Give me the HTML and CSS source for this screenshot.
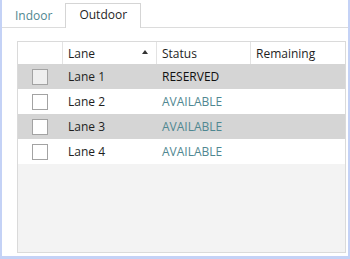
FILE: index.html
```html
<!DOCTYPE html>
<html lang="en">
<head>
<meta charset="UTF-8" />
<title>Lanes</title>
<link rel="stylesheet" href="styles.css">
</head>
<body>

<div class="window">
  <div class="tabs">
    <div class="tab">Indoor</div>
    <div class="tab active">Outdoor</div>
  </div>

  <div class="panel">
    <div class="grid">
      <div class="row head">
        <div class="cell"></div>
        <div class="cell sorted">Lane <span class="sort-arrow"></span></div>
        <div class="cell">Status</div>
        <div class="cell">Remaining</div>
      </div>
      <div class="row alt">
        <div class="cell check"><span class="box filled"></span></div>
        <div class="cell">Lane 1</div>
        <div class="cell reserved">RESERVED</div>
        <div class="cell"></div>
      </div>
      <div class="row">
        <div class="cell check"><span class="box"></span></div>
        <div class="cell">Lane 2</div>
        <div class="cell available">AVAILABLE</div>
        <div class="cell"></div>
      </div>
      <div class="row alt">
        <div class="cell check"><span class="box"></span></div>
        <div class="cell">Lane 3</div>
        <div class="cell available">AVAILABLE</div>
        <div class="cell"></div>
      </div>
      <div class="row">
        <div class="cell check"><span class="box"></span></div>
        <div class="cell">Lane 4</div>
        <div class="cell available">AVAILABLE</div>
        <div class="cell"></div>
      </div>
      <div class="filler"></div>
    </div>
  </div>
</div>

</body>
</html>
```

FILE: styles.css
```css
html, body {
  margin: 0;
  padding: 0;
  height: 100%;
}
body {
  font-family: 'Open Sans', 'Noto Sans', sans-serif;
  font-size: 12px;
  color: #1e1e1e;
  background: #fff;
}
.window {
  box-sizing: border-box;
  height: 100vh;
  border: 2px solid #c4d2f6;
  border-top: none;
  border-bottom-width: 3px;
  display: flex;
  flex-direction: column;
}
/* Tabs */
.tabs {
  display: flex;
  align-items: flex-end;
  height: 27px;
  border-bottom: 1px solid #dcdcdc;
}
.tab {
  padding: 0 13px;
  height: 23px;
  line-height: 23px;
  color: #4f8791;
}
.tab.active {
  height: 24px;
  box-sizing: border-box;
  padding: 0 13px;
  line-height: 22px;
  border: 1px solid #d5d5d5;
  border-bottom: none;
  color: #1e1e1e;
  margin-bottom: -1px;
  background: #fff;
  height: 25px;
}
/* Grid */
.panel {
  flex: 1;
  display: flex;
  padding: 13px 2px 3px 15px;
}
.grid {
  flex: 1;
  display: flex;
  flex-direction: column;
  border: 1px solid #dadada;
  background: #f3f3f3;
}
.row {
  display: grid;
  grid-template-columns: 45px 94px 94px 1fr;
  height: 25px;
  background: #fff;
}
.row.alt {
  background: #d5d5d5;
}
.row.head {
  height: 22px;
  background: #fff;
}
.row.head .cell {
  border-right: 1px solid #e3e3e3;
}
.row.head .cell:last-child {
  border-right: none;
}
.cell {
  display: flex;
  align-items: center;
  padding-left: 5px;
  white-space: nowrap;
}
.cell.sorted {
  justify-content: space-between;
  padding-right: 8px;
}
.sort-arrow {
  width: 0;
  height: 0;
  border-left: 3.5px solid transparent;
  border-right: 3.5px solid transparent;
  border-bottom: 4px solid #333;
  margin-top: -2px;
}
.cell.check {
  justify-content: center;
  padding-left: 0;
  padding-right: 1px;
}
.box {
  box-sizing: border-box;
  width: 16px;
  height: 16px;
  border: 1px solid #a3a3a3;
  background: #fff;
}
.box.filled {
  background: #efefef;
}
.reserved {
  color: #111;
}
.available {
  color: #4f8791;
}
.filler {
  flex: 1;
}
```
